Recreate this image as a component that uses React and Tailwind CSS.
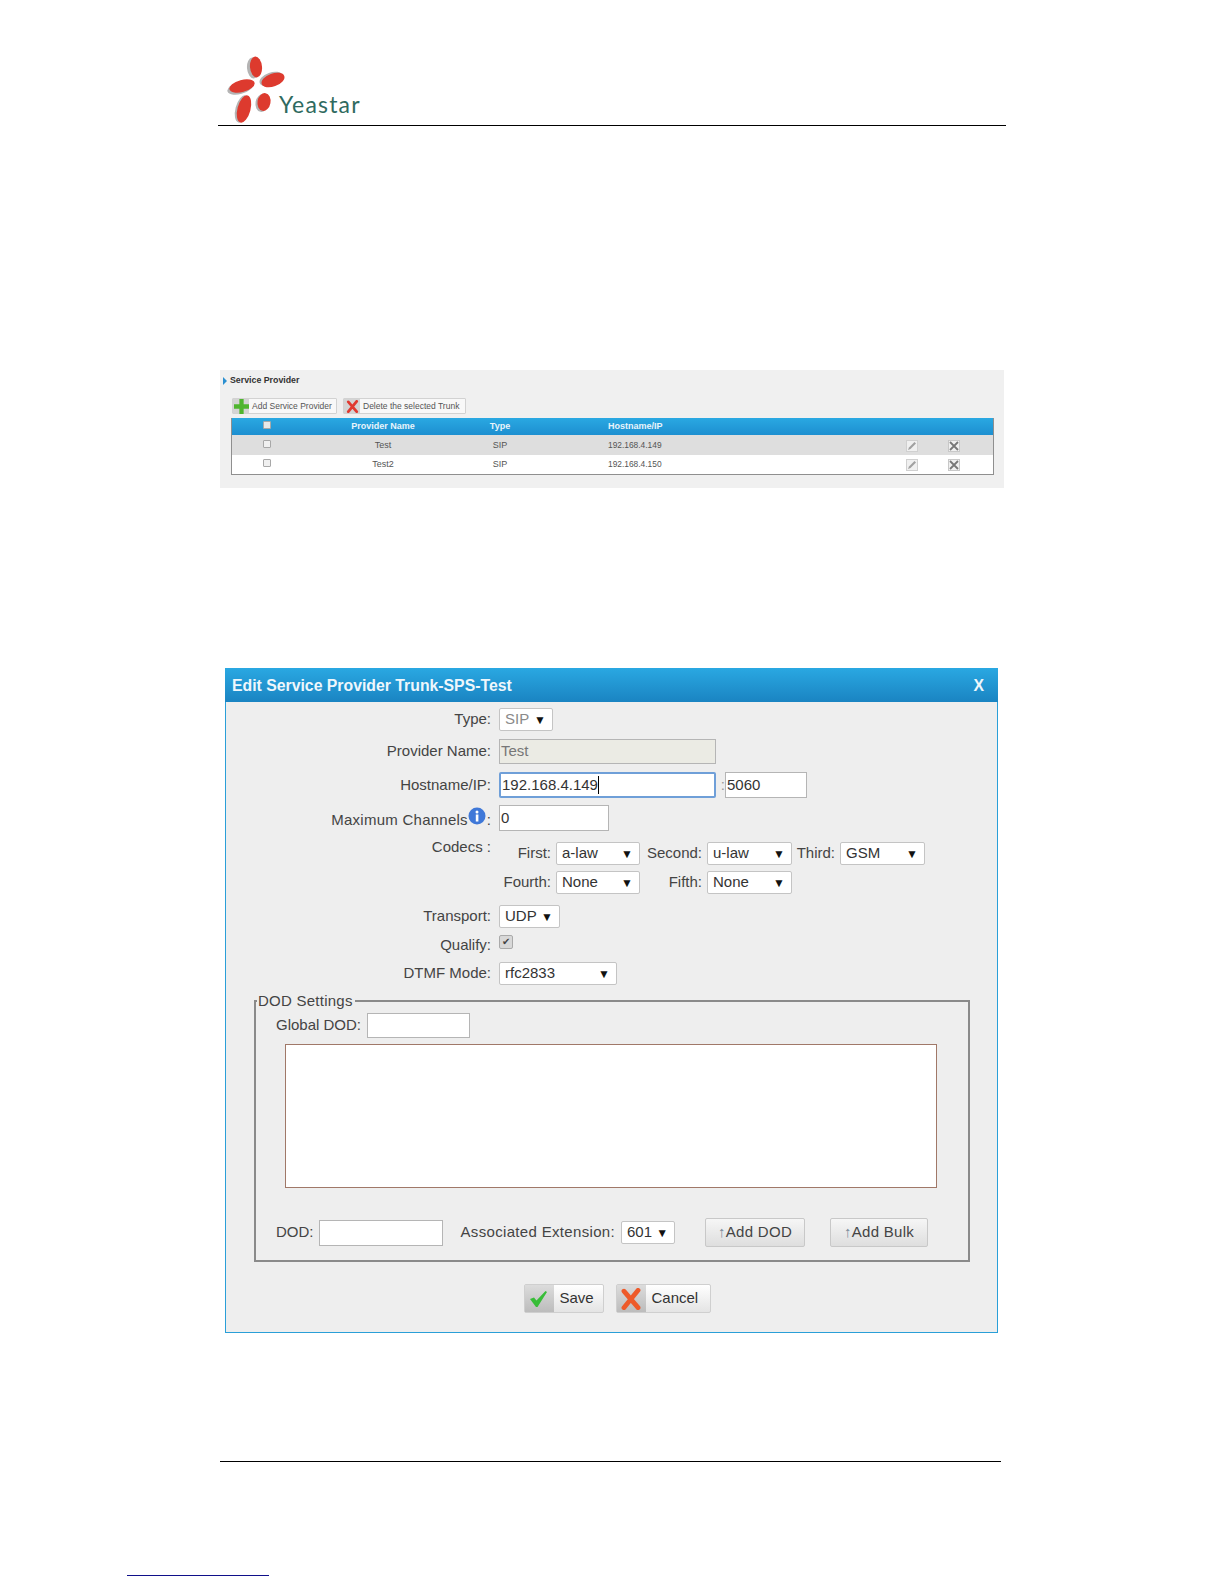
const Select = ({ value, className, disabled }) => (
  <div className={`flex items-center justify-between h-[23px] pl-[5px] pr-[6px] bg-white border border-[#c4c4c4] rounded-[2px] text-[15px] ${disabled ? "text-[#8a8a8a]" : "text-[#333]"} ${className}`}>
    <span>{value}</span>
    <span className="text-[12px] text-[#111]">▼</span>
  </div>
);

const Field = ({ children, className }) => (
  <div className={`flex items-center pl-[1px] h-[26px] bg-white border border-[#b5b5b5] text-[15px] text-[#333] ${className}`}>
    {children}
  </div>
);

const Row = ({ label, children, className }) => (
  <div className={`flex ${className}`}>
    <div className="w-[265px] text-right text-[15px] text-[#444]">{label}</div>
    <div className="ml-[8px] flex items-center">{children}</div>
  </div>
);

const CodecLabel = ({ children }) => (
  <div className="pr-[5px] text-right text-[15px] text-[#444]">{children}</div>
);

const Logo = () => (
  <svg width="150" height="70" viewBox="0 0 150 70" className="ml-[8px]">
    <g fill="#b4b4b4">
      <ellipse cx="27" cy="13" rx="6" ry="10.5" transform="rotate(-5 27 13)" />
      <ellipse cx="45" cy="24" rx="12" ry="6.5" transform="rotate(-20 45 24)" />
      <ellipse cx="14" cy="33" rx="13" ry="6" transform="rotate(-15 14 33)" />
      <ellipse cx="16" cy="54" rx="6.5" ry="14" transform="rotate(15 16 54)" />
      <ellipse cx="36" cy="48" rx="6.5" ry="9" transform="rotate(10 36 48)" />
    </g>
    <g fill="#dd3a2e">
      <ellipse cx="30" cy="12" rx="6" ry="10.5" transform="rotate(-5 30 12)" />
      <ellipse cx="47" cy="25" rx="12" ry="6.5" transform="rotate(-20 47 25)" />
      <ellipse cx="16" cy="31" rx="13" ry="6" transform="rotate(-15 16 31)" />
      <ellipse cx="18" cy="54" rx="6.5" ry="14" transform="rotate(15 18 54)" />
      <ellipse cx="38" cy="47" rx="6.5" ry="9" transform="rotate(10 38 47)" />
    </g>
    <text x="53" y="58" fill="#2f6a60" fontSize="23" letterSpacing="1.200" fontFamily="Lato, sans-serif">Yeastar</text>
  </svg>
);

const PlusIcon = () => (
  <svg width="15" height="15" viewBox="0 0 14 14">
    <path d="M5 0h4v5h5v4H9v5H5V9H0V5h5z" fill="#4fb52e" />
  </svg>
);

const CrossIcon = ({ size, color }) => (
  <svg width={size} height={size} viewBox="0 0 14 14">
    <path d="M2.500 2 11.500 12.500M11.500 1.500 2.500 12.500" stroke={color} strokeWidth="3" strokeLinecap="round" />
  </svg>
);

const CheckIcon = () => (
  <svg width="18" height="18" viewBox="0 0 18 18">
    <path d="M0 9l4-1.500 2.500 3L15.500 1 17 2 7.500 17h-1.500z" fill="#38bd38" />
  </svg>
);

const PencilIcon = () => (
  <div className="flex items-center justify-center w-[12px] h-[12px] bg-[#f0f0f0] border border-[#d0d0d0]">
    <svg width="10" height="10" viewBox="0 0 10 10">
      <path d="M1 9l1-2.500L7.500 1 9 2.500 3.500 8z" fill="#a0a0a0" />
    </svg>
  </div>
);

const DeleteIcon = () => (
  <div className="flex items-center justify-center w-[12px] h-[12px] bg-[#f0f0f0] border border-[#c8c8c8]">
    <svg width="10" height="10" viewBox="0 0 10 10">
      <path d="M1 1l8 8M9 1L1 9" stroke="#777" strokeWidth="1.800" />
    </svg>
  </div>
);

const InfoIcon = () => (
  <svg width="18" height="18" viewBox="0 0 18 18" className="shrink-0 mt-[2px]">
    <circle cx="9" cy="9" r="8.500" fill="#3f78d8" />
    <circle cx="9" cy="5" r="1.500" fill="#fff" />
    <rect x="7.800" y="7.500" width="2.600" height="7" fill="#fff" />
  </svg>
);

const Checkbox = ({ className }) => (
  <div className={`w-[8px] h-[8px] rounded-[1px] border border-[#a8a8a8] ${className}`}></div>
);

const ToolButton = ({ icon, label, className }) => (
  <div className={`flex items-center h-[16px] bg-[#f8f8f8] border border-[#d2d2d2] rounded-[1px] whitespace-nowrap ${className}`}>
    <div className="flex items-center justify-center w-[16px] h-full shrink-0 bg-[#d4d4d4]">{icon}</div>
    <span className="ml-[3px] text-[8.500px] text-[#555]">{label}</span>
  </div>
);

const ProviderRow = ({ name, ip, className }) => (
  <div className={`grid grid-cols-[70px_162px_72px_356px_40px_44px] items-center text-[9px] text-[#555] ${className}`}>
    <Checkbox className="justify-self-center -mt-[3px] bg-[#f0f0f0]" />
    <div className="text-center">{name}</div>
    <div className="text-center">SIP</div>
    <div className="pl-[72px] text-[8.400px]">{ip}</div>
    <div className="justify-self-center"><PencilIcon /></div>
    <div className="justify-self-center"><DeleteIcon /></div>
  </div>
);

const ServiceProvider = () => (
  <div className="ml-[220px] mt-[244px] w-[784px] h-[118px] bg-[#f0f0f0]">
    <div className="flex items-center h-[22px] pl-[3px]">
      <div className="w-0 h-0 border-y-[4px] border-y-transparent border-l-[4px] border-l-[#2a8fd0]"></div>
      <span className="ml-[3px] text-[8.800px] font-bold text-[#333]">Service Provider</span>
    </div>
    <div className="flex gap-[6px] ml-[12px] mt-[5px] pt-[1px]">
      <ToolButton icon={<PlusIcon />} label="Add Service Provider" className="w-[105px]" />
      <ToolButton icon={<CrossIcon size={13} color="#e03a30" />} label="Delete the selected Trunk" className="w-[123px]" />
    </div>
    <div className="ml-[11px] mt-[4px] w-[763px] border-x border-b border-[#8f8f8f]">
      <div className="grid grid-cols-[70px_162px_72px_356px] items-center h-[17px] pt-[1px] bg-gradient-to-b from-[#2aa8e2] to-[#1d8fd0] text-[9px] font-bold text-[#e8f4fb]">
        <Checkbox className="justify-self-center -mt-[4px] bg-[#e8e8e8]" />
        <div className="text-center">Provider Name</div>
        <div className="text-center">Type</div>
        <div className="pl-[72px]">Hostname/IP</div>
      </div>
      <ProviderRow name="Test" ip="192.168.4.149" className="h-[20px] pt-[1px] bg-[#dedede]" />
      <ProviderRow name="Test2" ip="192.168.4.150" className="h-[19px] bg-white" />
    </div>
  </div>
);

const BigButton = ({ icon, label, className }) => (
  <div className={`flex items-center h-[29px] bg-gradient-to-b from-white to-[#e4e4e4] border border-[#cfcfcf] rounded-[2px] ${className}`}>
    <div className="flex items-center justify-center w-[29px] h-full bg-gradient-to-b from-[#dcdcdc] to-[#bcbcbc]">{icon}</div>
    <span className="ml-[6px] text-[15px] text-[#333]">{label}</span>
  </div>
);

const AddButton = ({ label, className }) => (
  <div className={`flex items-center justify-center h-[29px] bg-gradient-to-b from-[#f6f6f6] to-[#dedede] border border-[#c8c8c8] rounded-[2px] text-[15px] tracking-[0.3px] text-[#444] ${className}`}>
    <span className="text-[#7a8a9a]">↑</span>{label}
  </div>
);

const Dialog = () => (
  <div className="ml-[225px] mt-[180px] w-[773px] h-[665px] flex flex-col bg-[#eeeeee] border-x border-b border-[#2a9fd8]">
    <div className="flex items-center justify-between h-[34px] pt-[2px] -mx-[1px] pl-[7px] pr-[14px] bg-gradient-to-b from-[#2aa8e2] to-[#1a84c2] text-[15.800px] font-bold text-[#eef7fc]">
      <span>Edit Service Provider Trunk-SPS-Test</span>
      <span>X</span>
    </div>

    <Row label="Type:" className="mt-[6px] items-center">
      <Select value="SIP" disabled className="w-[54px]" />
    </Row>
    <Row label="Provider Name:" className="mt-[8px] items-center">
      <Field className="w-[217px] !h-[25px] !bg-[#ebebe4] !text-[#777]">Test</Field>
    </Row>
    <Row label="Hostname/IP:" className="mt-[8px] items-center">
      <div className="flex items-center h-[26px] w-[217px] pl-[1px] bg-white border-2 border-[#6f9fd8] rounded-[2px] text-[15px] text-[#333]">
        192.168.4.149<span className="w-[1px] h-[18px] bg-black"></span>
      </div>
      <span className="w-[9px] text-right text-[15px] text-[#999]">:</span>
      <Field className="w-[82px]">5060</Field>
    </Row>
    <Row
      label={
        <span className="inline-flex items-start justify-end">
          <span className="mt-[4px] tracking-[0.25px]">Maximum Channels</span>
          <InfoIcon />
          <span className="mt-[4px] ml-[1px]">:</span>
        </span>
      }
      className="mt-[7px] items-start h-[26px]"
    >
      <Field className="w-[110px]">0</Field>
    </Row>

    <div className="flex mt-[11px]">
      <div className="w-[265px] -mt-[6px] text-right text-[15px] text-[#444]">Codecs :</div>
      <div className="ml-[8px] grid grid-cols-[57px_84px_67px_85px_48px_85px] gap-y-[6px] items-center">
        <CodecLabel>First:</CodecLabel>
        <Select value="a-law" />
        <CodecLabel>Second:</CodecLabel>
        <Select value="u-law" />
        <CodecLabel>Third:</CodecLabel>
        <Select value="GSM" />
        <CodecLabel>Fourth:</CodecLabel>
        <Select value="None" />
        <CodecLabel>Fifth:</CodecLabel>
        <Select value="None" />
      </div>
    </div>

    <Row label="Transport:" className="mt-[11px] items-center">
      <Select value="UDP" className="w-[61px]" />
    </Row>
    <Row label="Qualify:" className="mt-[7px] items-center h-[20px]">
      <div className="flex items-center justify-center -mt-[6px] w-[14px] h-[14px] rounded-[2px] bg-[#d8d8d8] border border-[#aaa] text-[10px] leading-none text-[#444]">✔</div>
    </Row>
    <Row label="DTMF Mode:" className="mt-[7px] items-center">
      <Select value="rfc2833" className="w-[118px]" />
    </Row>

    <fieldset className="mt-[7px] ml-[28px] w-[716px] h-[270px] border-2 border-[#8a8a8a]">
      <legend className="ml-[1px] pl-[1px] pr-[2px] text-[15px] tracking-[0.25px] leading-[18px] text-[#444]">DOD Settings</legend>
      <div className="flex items-center mt-[3px] ml-[20px]">
        <span className="text-[15px] text-[#444]">Global DOD:</span>
        <Field className="ml-[6px] w-[103px] !h-[25px]" />
      </div>
      <div className="ml-[29px] mt-[6px] w-[652px] h-[144px] bg-white border border-[#a07868]"></div>
      <div className="flex items-center ml-[20px] mt-[30px]">
        <span className="text-[15px] text-[#444]">DOD:</span>
        <Field className="ml-[5px] w-[124px]" />
        <span className="ml-[18px] text-[15px] tracking-[0.33px] text-[#444]">Associated Extension:</span>
        <Select value="601" className="ml-[6px] w-[54px]" />
        <AddButton label="Add DOD" className="ml-[30px] w-[100px]" />
        <AddButton label="Add Bulk" className="ml-[25px] w-[98px]" />
      </div>
    </fieldset>

    <div className="flex justify-center gap-[12px] mt-[22px] pl-[11px]">
      <BigButton icon={<CheckIcon />} label="Save" className="w-[80px]" />
      <BigButton icon={<CrossIcon size={22} color="#ee5a2a" />} label="Cancel" className="w-[95px]" />
    </div>
  </div>
);

export default function App() {
  return (
    <div className="w-[1224px] h-[1584px] overflow-hidden bg-white font-['Liberation_Sans',Arial,sans-serif]">
      <div className="ml-[218px] w-[788px] h-[126px] pt-[55px] border-b border-black">
        <Logo />
      </div>
      <ServiceProvider />
      <Dialog />
      <div className="ml-[220px] mt-[128px] w-[781px] h-[1px] bg-black"></div>
      <div className="ml-[127px] mt-[113px] w-[142px] h-[1px] bg-[#10108a]"></div>
    </div>
  );
}
